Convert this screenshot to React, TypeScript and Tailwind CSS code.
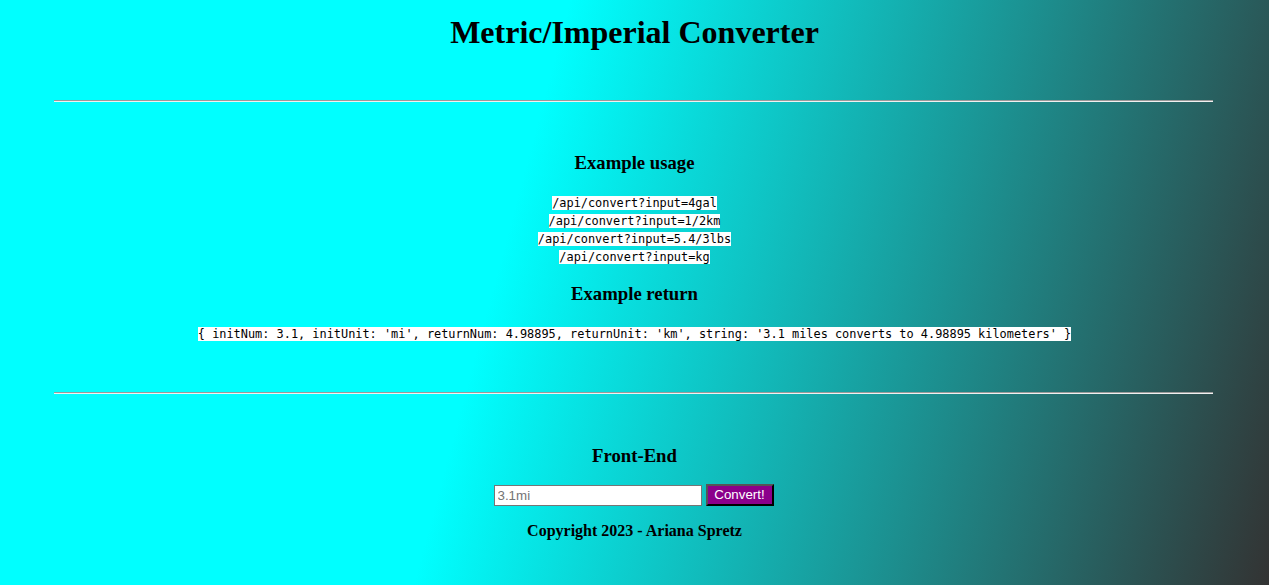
import React from "react";

const usage = [
  "/api/convert?input=4gal",
  "/api/convert?input=1/2km",
  "/api/convert?input=5.4/3lbs",
  "/api/convert?input=kg",
];

function Rule() {
  return <div className="ml-[54px] mr-[56px] border-t border-b border-t-[#9a9a9a] border-b-[#f0f0f0]" />;
}

function Code({ children }: { children: React.ReactNode }) {
  return (
    <code className="bg-white text-black font-['DejaVu_Sans_Mono',monospace] text-[11.9px] leading-[18px]">
      {children}
    </code>
  );
}

const mono = "font-['DejaVu_Sans_Mono',monospace] text-[11.9px] leading-[18px]";

export default function App() {
  return (
    <div className="min-h-[585px] w-full overflow-hidden bg-[linear-gradient(105deg,#00ffff_40%,#333333_100%)] font-['Liberation_Serif',serif] text-black text-center">
      <h1 className="pt-[14px] text-[32px] leading-[37px] font-bold">Metric/Imperial Converter</h1>

      <div className="mt-[49px]">
        <Rule />
      </div>

      <h3 className="mt-[50px] text-[18.72px] leading-[22px] font-bold">Example usage</h3>
      <div className={`mt-[20px] flex flex-col items-center ${mono}`}>
        {usage.map((u) => (
          <div key={u} className="h-[18px]">
            <Code>{u}</Code>
          </div>
        ))}
      </div>

      <h3 className="mt-[17px] text-[18.72px] leading-[22px] font-bold">Example return</h3>
      <div className={`mt-[20px] h-[18px] ${mono}`}>
        <Code>
          {"{ initNum: 3.1, initUnit: 'mi', returnNum: 4.98895, returnUnit: 'km', string: '3.1 miles converts to 4.98895 kilometers' }"}
        </Code>
      </div>

      <div className="mt-[49px]">
        <Rule />
      </div>

      <h3 className="mt-[51px] text-[18.72px] leading-[22px] font-bold">Front-End</h3>
      <form className="mt-[17px] flex items-center justify-center gap-[4px] pr-[2px]" onSubmit={(e) => e.preventDefault()}>
        <input
          type="text"
          placeholder="3.1mi"
          className="w-[208px] h-[21px] border border-[#767676] bg-white pl-[3px] font-['Liberation_Sans',Arial,sans-serif] text-[13.33px] text-black placeholder:text-[#757575] outline-none"
        />
        <button
          type="submit"
          className="h-[22px] w-[68px] border-2 border-black border-t-[#555] border-l-[#555] bg-[#8b008b] font-['Liberation_Sans',Arial,sans-serif] text-[13.33px] leading-none text-white"
        >
          Convert!
        </button>
      </form>

      <p className="mt-[16px] text-[16px] leading-[18px] font-bold">Copyright 2023 - Ariana Spretz</p>
    </div>
  );
}
